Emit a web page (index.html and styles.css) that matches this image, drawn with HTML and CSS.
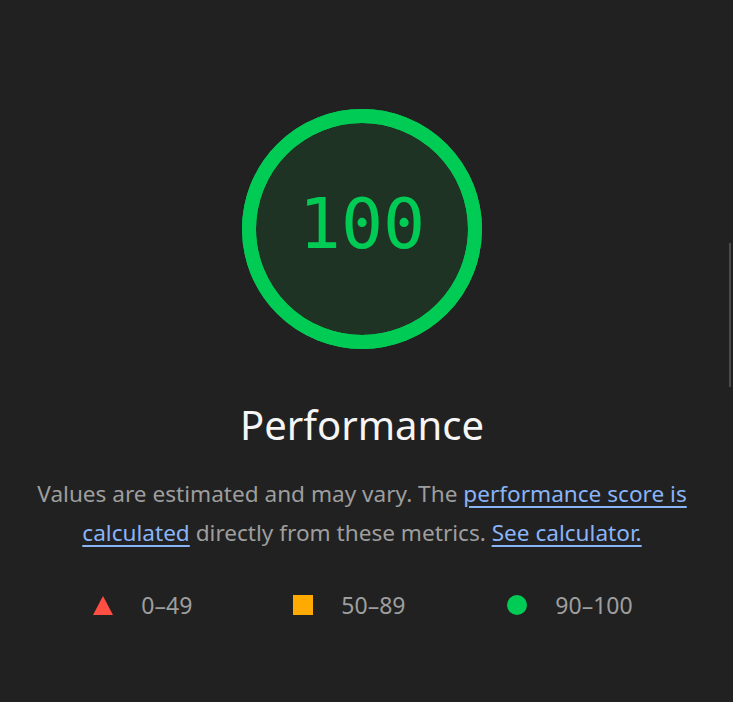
FILE: index.html
```html
<!DOCTYPE html>
<html>
<head>
<meta charset="utf-8">
<link rel="stylesheet" href="styles.css">
</head>
<body>
<main class="category">
  <div class="gauge">
    <svg class="gauge-svg" viewBox="0 0 240 240" width="240" height="240">
      <circle cx="120" cy="120" r="113" class="gauge-base"/>
      <circle cx="120" cy="120" r="113" class="gauge-arc"/>
    </svg>
    <div class="gauge-score">100</div>
  </div>
  <h1 class="title">Performance</h1>
  <p class="desc">Values are estimated and may vary. The <a href="#">performance score is calculated</a> directly from these metrics. <a href="#">See calculator.</a></p>
  <div class="legend">
    <span class="item"><span class="icon tri"></span><span class="range">0–49</span></span>
    <span class="item"><span class="icon sq"></span><span class="range">50–89</span></span>
    <span class="item"><span class="icon dot"></span><span class="range">90–100</span></span>
  </div>
</main>
<div class="scrollbar"></div>
</body>
</html>
```
FILE: styles.css
```css
html, body {
  margin: 0;
  padding: 0;
  background: #212121;
  height: 100%;
  overflow: hidden;
}
body {
  font-family: "Noto Sans", "Open Sans", sans-serif;
  color: #9e9e9e;
}
.category {
  display: flex;
  flex-direction: column;
  align-items: center;
  padding-top: 109px;
  padding-right: 9px;
}
.gauge {
  position: relative;
  width: 240px;
  height: 240px;
}
.gauge-svg {
  display: block;
}
.gauge-base {
  fill: #1f3325;
  stroke: #00cc55;
  stroke-width: 14;
}
.gauge-arc {
  fill: none;
  stroke: #00cc55;
  stroke-width: 14;
}
.gauge-score {
  position: absolute;
  inset: 0;
  display: flex;
  align-items: center;
  justify-content: center;
  font-family: "DejaVu Sans Mono", monospace;
  font-size: 70px;
  color: #00cc55;
  padding-bottom: 10px;
  box-sizing: border-box;
}
.title {
  margin: 48px 0 0;
  font-weight: 400;
  font-size: 40px;
  line-height: 56px;
  color: #f5f5f5;
}
.desc {
  margin: 21px 0 0;
  width: 690px;
  text-align: center;
  font-size: 22.6px;
  line-height: 39px;
  color: #9e9e9e;
}
.desc a {
  color: #8ab4f8;
  text-decoration: underline;
  text-underline-offset: 4px;
}
.legend {
  display: flex;
  margin-top: 38px;
  margin-left: 2px;
}
.item {
  display: flex;
  align-items: center;
  font-size: 23px;
  line-height: 30px;
}
.item:nth-child(1) { width: 200px; }
.item:nth-child(2) { width: 214px; }
.icon {
  width: 20px;
  height: 20px;
  margin-right: 28px;
  display: inline-block;
}
.tri {
  width: 0;
  height: 0;
  border-left: 10px solid transparent;
  border-right: 10px solid transparent;
  border-bottom: 19px solid #ff4e42;
}
.sq {
  background: #ffaa00;
}
.dot {
  background: #00cc55;
  border-radius: 50%;
}
.range {
  color: #9e9e9e;
}
.scrollbar {
  position: absolute;
  right: 2px;
  top: 243px;
  width: 2px;
  height: 144px;
  background: #4a4a4a;
}
```
